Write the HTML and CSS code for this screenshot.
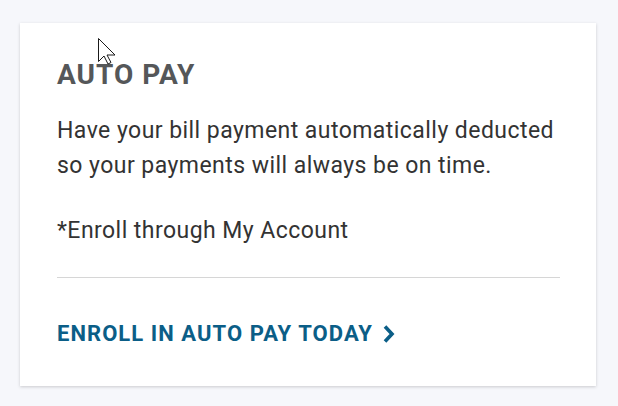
FILE: index.html
```html
<!DOCTYPE html>
<html>
<head>
<meta charset="utf-8">
<link rel="stylesheet" href="styles.css">
</head>
<body>
<div class="card">
  <h2 class="title">AUTO PAY</h2>
  <p class="text">Have your bill payment automatically deducted so your payments will always be on time.</p>
  <p class="text note">*Enroll through My Account</p>
  <hr class="divider">
  <a class="link" href="#">ENROLL IN AUTO PAY TODAY
    <svg class="chev" width="14" height="20" viewBox="0 0 14 20"><path d="M3 2.5 L10 10 L3 17.5" fill="none" stroke="#0b5e87" stroke-width="3.6"/></svg>
  </a>
</div>
<svg class="cursor" width="22" height="30" viewBox="0 0 22 30"><path d="M1.5 1.5 L1.5 24.5 L7 19 L11 27 L14 25.5 L10 18 L18 18 Z" fill="#fff" stroke="#1a1a1a" stroke-width="1" stroke-linejoin="miter"/></svg>
</body>
</html>
```
FILE: styles.css
```css
html, body { margin: 0; padding: 0; }
body {
  background: #f6f7fb;
  font-family: Roboto, "Liberation Sans", sans-serif;
  padding: 23px 22px 20px 20px;
  position: relative;
  height: 406px;
  box-sizing: border-box;
}
.card {
  background: #fff;
  box-shadow: 0 1px 3px rgba(0,0,0,0.18);
  padding: 35px 36px 0 37px;
  width: 576px;
  box-sizing: border-box;
  height: 363px;
}
.title {
  margin: 0;
  font-size: 28px;
  font-weight: 700;
  color: #555759;
  line-height: 34px;
  letter-spacing: 1px;
}
.text {
  margin: 21px 0 0;
  font-size: 23px;
  line-height: 35px;
  color: #333;
  letter-spacing: 0.45px;
}
.note { margin-top: 30px; }
.divider {
  border: 0;
  border-top: 1px solid #d6d6d6;
  margin: 29px 0 0;
}
.link {
  display: flex;
  align-items: center;
  gap: 9px;
  margin-top: 43px;
  font-size: 22px;
  font-weight: 700;
  color: #0b5e87;
  text-decoration: none;
  line-height: 26px;
  letter-spacing: 1.05px;
}
.cursor {
  position: absolute;
  left: 97px;
  top: 37px;
}
```
